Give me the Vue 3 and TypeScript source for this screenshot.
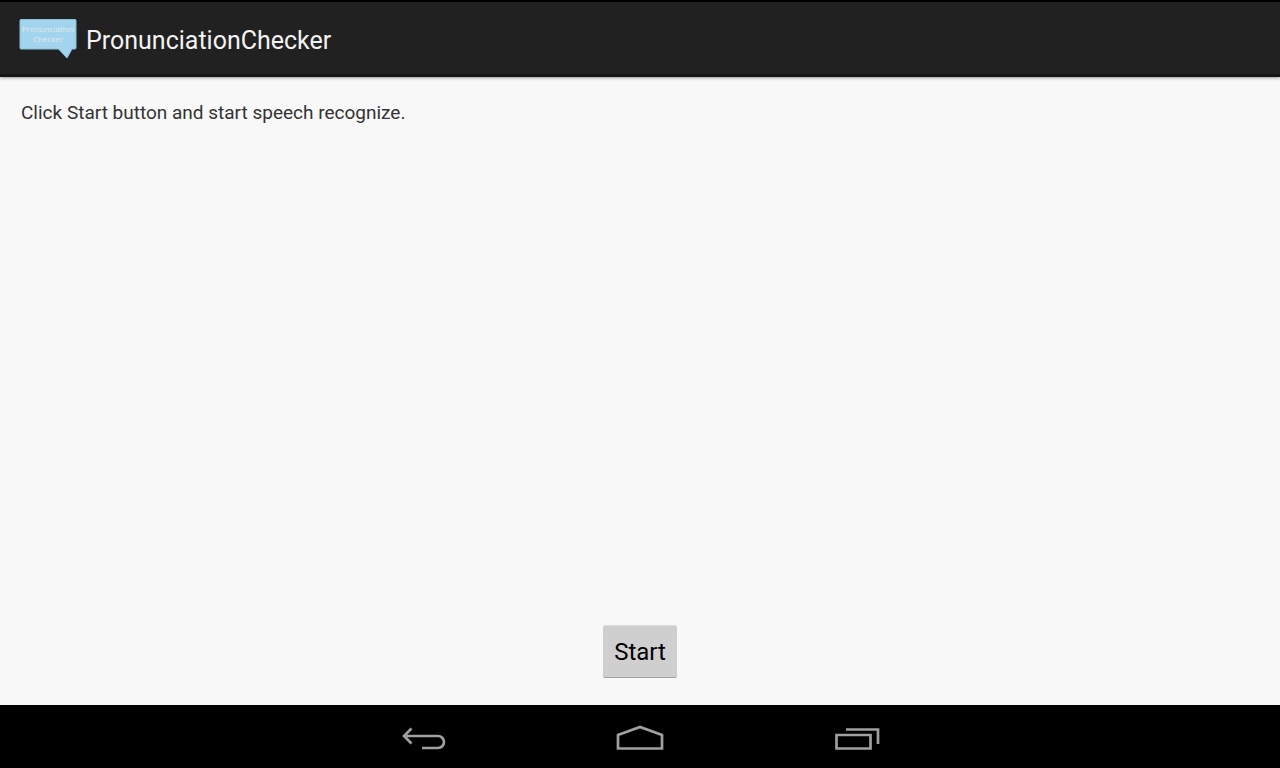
<script setup lang="ts">
import { ref } from 'vue'

const title = 'PronunciationChecker'
const message = ref('Click Start button and start speech recognize.')
</script>

<template>
  <div class="screen">
    <header class="action-bar">
      <svg class="logo" viewBox="0 0 60 44" aria-hidden="true">
        <path d="M3 2.5H57Q58 2.5 58 3.5V31Q58 32 57 32H54L49 41L40.5 32H3Q2 32 2 31V3.5Q2 2.5 3 2.5Z" fill="#a3d4ed" stroke="#8bc0d8" stroke-width="1" />
        <text class="logo-text" x="30" y="15" text-anchor="middle">Pronunciation</text>
        <text class="logo-text" x="30" y="25" text-anchor="middle">Checker</text>
      </svg>
      <h1 class="title">{{ title }}</h1>
    </header>

    <main class="content">
      <p class="message">{{ message }}</p>
      <button class="start" type="button">Start</button>
    </main>

    <nav class="nav-bar" aria-label="System navigation">
      <button class="nav-button" type="button" aria-label="Back">
        <svg width="48" height="32" viewBox="0 0 48 32" stroke-width="2.7">
          <path d="M12.5 5.5L5 13L12.5 20.5M5 13H39A6 6 0 0 1 39 25H23" />
        </svg>
      </button>
      <button class="nav-button" type="button" aria-label="Home">
        <svg width="48" height="32" viewBox="0 0 48 32" stroke-width="2.7">
          <path d="M2 12L24 4L46 12V25.5H2Z" />
        </svg>
      </button>
      <button class="nav-button" type="button" aria-label="Recent apps">
        <svg width="48" height="32" viewBox="0 0 48 32" stroke-width="2.7">
          <path d="M3.5 12H37.5V25.5H3.5ZM13 6.5H45V21" />
        </svg>
      </button>
    </nav>
  </div>
</template>

<style>
body {
  margin: 0;
  background: #000;
}
</style>

<style scoped>
.screen {
  display: flex;
  flex-direction: column;
  min-height: 100vh;
  font-family: Roboto, "Liberation Sans", sans-serif;
  background: #f8f8f8;
}

.action-bar {
  display: flex;
  align-items: center;
  gap: 8px;
  box-sizing: border-box;
  height: 77px;
  padding: 2px 18px 0;
  border-top: 2px solid #000;
  border-bottom: 3px solid #151515;
  background: #212121;
  box-shadow: 0 1px 3px rgba(0, 0, 0, 0.4);
}

.logo {
  width: 60px;
  height: 44px;
}

.logo-text {
  font-family: "Open Sans", sans-serif;
  font-size: 8px;
  fill: #e2e8ea;
}

.title {
  margin: 0;
  padding-top: 4px;
  color: #f3f3f3;
  font-size: 25px;
  font-weight: 400;
  line-height: 32px;
}

.content {
  display: flex;
  flex: 1;
  flex-direction: column;
  justify-content: space-between;
  padding: 24px 21px 27px;
}

.message {
  margin: 0;
  color: #333;
  font-size: 19px;
  line-height: 24px;
}

.start {
  align-self: center;
  height: 53px;
  padding: 0 11px;
  border: 0;
  border-top: 1px solid #dcdcdc;
  border-bottom: 1px solid #a0a0a0;
  border-radius: 2px;
  background: #cfcfcf;
  color: #000;
  font-family: inherit;
  font-size: 24px;
  line-height: 32px;
}

.nav-bar {
  display: flex;
  justify-content: center;
  height: 63px;
  background: #000;
}

.nav-button {
  display: flex;
  align-items: center;
  justify-content: center;
  width: 217px;
  padding: 4px 0 0;
  border: 0;
  background: transparent;
}

.nav-button svg {
  fill: none;
  stroke: #a0a0a0;
}
</style>
